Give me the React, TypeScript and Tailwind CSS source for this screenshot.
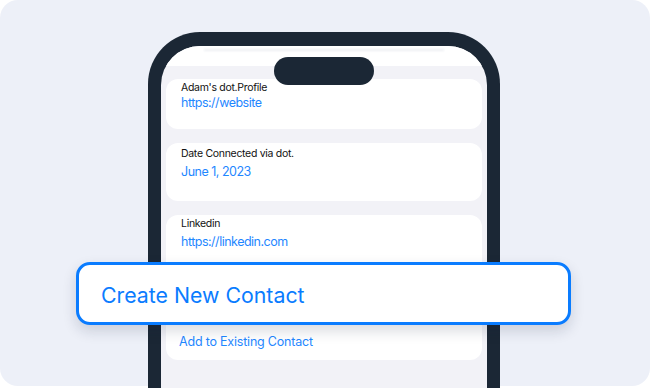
import React from "react";

const font = { fontFamily: "Inter, 'Noto Sans', sans-serif" };

export default function App() {
  return (
    <div className="relative w-[650px] h-[388px] bg-white overflow-hidden" style={font}>
      <div className="h-[386px] rounded-[18px] bg-[#edf0f8] pt-[32px] pl-[148px]">
        <div className="w-[352px] h-[420px] rounded-t-[52px] bg-[#1b2735] pt-[14px] px-[13px]">
          <div className="relative h-full rounded-t-[39px] bg-[#f2f2f7] overflow-hidden">
            <div className="h-[20px] bg-white flex items-start justify-center pt-[3px]">
              <div className="w-[240px] h-[2px] bg-[#eceef2] blur-[1px]" />
            </div>
            <div className="absolute left-[113px] top-[11px] w-[100px] h-[28px] rounded-full bg-[#1b2735]" />
            <div className="px-[5px] pt-[13px] flex flex-col gap-[14px]">
              <div className="h-[50px] rounded-[12px] bg-white pl-[15px] pt-[2px]">
                <div className="text-[10.5px] leading-[13px] tracking-[-0.3px] text-[#111]">Adam's dot.Profile</div>
                <div className="mt-[1px] text-[12.5px] leading-[16px] tracking-[-0.5px] text-[#1f87ff]">https://website</div>
              </div>
              <div className="h-[58px] rounded-[12px] bg-white pl-[15px] pt-[4px]">
                <div className="text-[10.5px] leading-[13px] tracking-[-0.3px] text-[#111]">Date Connected via dot.</div>
                <div className="mt-[4px] text-[12.5px] leading-[16px] tracking-[-0.5px] text-[#1f87ff]">June 1, 2023</div>
              </div>
              <div className="h-[145px] rounded-[12px] bg-white pl-[15px] pt-[2px]">
                <div className="text-[10.5px] leading-[13px] tracking-[-0.3px] text-[#111]">Linkedin</div>
                <div className="mt-[4px] text-[12.5px] leading-[16px] tracking-[-0.5px] text-[#1f87ff]">https://linkedin.com</div>
                <div className="mt-[84px] -ml-[2px] text-[12.5px] leading-[16px] tracking-[-0.2px] text-[#1f87ff]">Add to Existing Contact</div>
              </div>
            </div>
          </div>
        </div>
      </div>
      <div className="absolute left-[76px] top-[262px] w-[495px] h-[63px] rounded-[14px] border-[3px] border-[#0a7cff] bg-white flex items-center pl-[22px] pt-[2px] shadow-[0_6px_14px_rgba(20,30,60,0.16)]">
        <span className="text-[21.3px] leading-[26px] text-[#0a7cff]">Create New Contact</span>
      </div>
    </div>
  );
}
